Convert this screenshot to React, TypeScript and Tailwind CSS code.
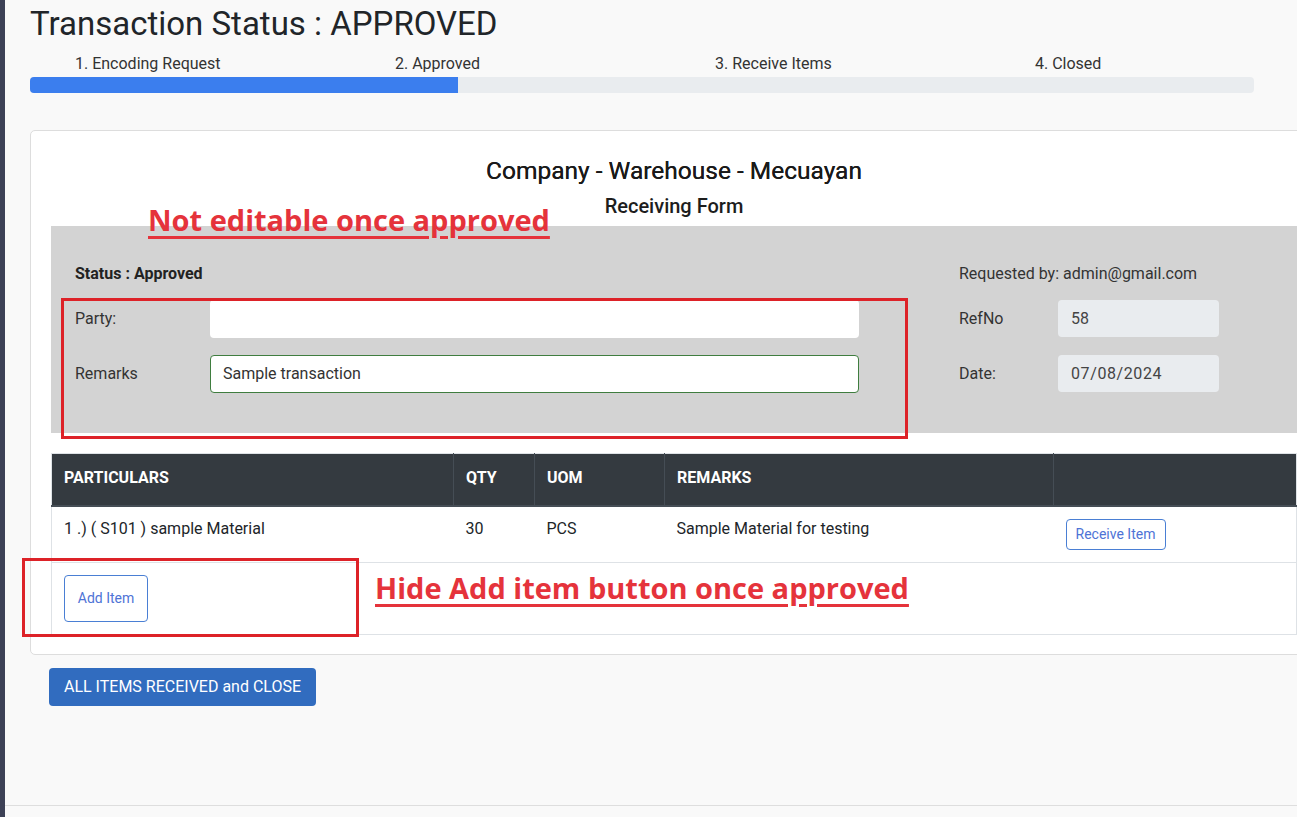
import React from "react";

const steps = ["1. Encoding Request", "2. Approved", "3. Receive Items", "4. Closed"];

const items = [
  {
    particulars: "1 .) ( S101 ) sample Material",
    qty: "30",
    uom: "PCS",
    remarks: "Sample Material for testing",
  },
];

export default function App() {
  return (
    <div className="relative flex h-[817px] w-[1297px] overflow-hidden bg-[#f9f9f9] font-['Roboto',sans-serif] text-[#212529]">
      {/* sidebar edge */}
      <div className="w-[5px] shrink-0 bg-[#3d4156]" />

      <div className="flex min-w-0 flex-1 flex-col">
        <main className="h-[806px] shrink-0 border-b border-[#dedede] pl-[25px]">
          <h1 className="mt-[3px] text-[33px] leading-[42px] text-[#212529]">Transaction Status : APPROVED</h1>

          <div className="mt-[8px] w-[1224px]">
            <div className="grid grid-cols-[320px_320px_320px_264px] text-[16px] leading-[22px] text-[#333]">
              {steps.map((step) => (
                <span key={step} className="pl-[45px]">
                  {step}
                </span>
              ))}
            </div>
            <div className="mt-[2px] h-[16px] overflow-hidden rounded bg-[#e9ecef]">
              <div className="h-full bg-[#3b7eee]" style={{ width: "35%" }} />
            </div>
          </div>

          <section className="mt-[37px] w-[1288px] rounded-[5px] border border-[#dddddd] bg-white px-[20px] pb-[19px] pt-[25px]">
            <h2 className="text-center text-[24.5px] leading-[30px] text-[#1a1a1a] [text-shadow:0_0_0.3px_#1a1a1a]">
              Company - Warehouse - Mecuayan
            </h2>
            <h3 className="mt-[6px] text-center text-[20px] font-medium leading-[28px] text-[#1d1d1d]">Receiving Form</h3>

            <div className="mt-[6px] flex h-[207px] bg-[#d3d3d3] pl-[24px] pt-[36px] text-[16px]">
              <div className="w-[784px]">
                <p className="h-[24px] font-bold leading-[24px] text-[#222]">Status : Approved</p>
                <div className="mt-[14px] flex items-center">
                  <label className="w-[135px] text-[#333]">Party:</label>
                  <div className="h-[38px] flex-1 rounded bg-white" />
                </div>
                <div className="mt-[17px] flex items-center">
                  <label className="w-[135px] text-[#333]">Remarks</label>
                  <div className="flex h-[38px] flex-1 items-center rounded border border-[#3f7d3f] bg-white px-[12px] text-[#333]">
                    Sample transaction
                  </div>
                </div>
              </div>

              <div className="ml-[100px]">
                <p className="h-[24px] leading-[24px] text-[#333]">Requested by: admin@gmail.com</p>
                <div className="mt-[14px] flex items-center">
                  <label className="w-[99px] text-[#333]">RefNo</label>
                  <div className="flex h-[37px] w-[161px] items-center rounded bg-[#e9ecef] px-[13px] text-[#444]">
                    58
                  </div>
                </div>
                <div className="mt-[18px] flex items-center">
                  <label className="w-[99px] text-[#333]">Date:</label>
                  <div className="flex h-[37px] w-[161px] items-center rounded bg-[#e9ecef] px-[13px] tracking-[0.6px] text-[#444]">
                    07/08/2024
                  </div>
                </div>
              </div>
            </div>

            <table className="mt-[20px] w-full border-collapse border border-[#dee2e6] text-left text-[16px]">
              <thead>
                <tr className="h-[52px] bg-[#343a40] text-white">
                  <th className="w-[402px] border-b-2 border-[#454d55] px-[12px] pb-[2px] font-bold">PARTICULARS</th>
                  <th className="w-[81px] border-b-2 border-l border-[#454d55] px-[12px] pb-[2px] font-bold">QTY</th>
                  <th className="w-[130px] border-b-2 border-l border-[#454d55] px-[12px] pb-[2px] font-bold">UOM</th>
                  <th className="w-[389px] border-b-2 border-l border-[#454d55] px-[12px] pb-[2px] font-bold">REMARKS</th>
                  <th className="border-b-2 border-l border-[#454d55] px-[12px]" />
                </tr>
              </thead>
              <tbody>
                {items.map((item) => (
                  <tr key={item.particulars} className="border-b border-[#dee2e6] align-top text-[#212529]">
                    <td className="px-[12px] pb-[12px] pt-[10px] leading-[24px]">{item.particulars}</td>
                    <td className="px-[12px] pb-[12px] pt-[10px] leading-[24px]">{item.qty}</td>
                    <td className="px-[12px] pb-[12px] pt-[10px] leading-[24px]">{item.uom}</td>
                    <td className="px-[12px] pb-[12px] pt-[10px] leading-[24px]">{item.remarks}</td>
                    <td className="px-[12px] py-[12px]">
                      <button className="h-[31px] w-[100px] rounded border border-[#4a7fd4] bg-white text-[14px] text-[#4e73d6]">
                        Receive Item
                      </button>
                    </td>
                  </tr>
                ))}
                <tr className="border-b border-[#dee2e6]">
                  <td colSpan={5} className="px-[12px] py-[12px]">
                    <button className="h-[47px] w-[84px] rounded border border-[#4a7fd4] bg-white text-[14px] text-[#4e73d6]">
                      Add Item
                    </button>
                  </td>
                </tr>
              </tbody>
            </table>
          </section>

          <button className="ml-[19px] mt-[13px] h-[38px] w-[267px] rounded bg-[#316cbf] text-[16px] text-white">
            ALL ITEMS RECEIVED and CLOSE
          </button>
        </main>
      </div>

      {/* review annotations drawn over the screenshot */}
      <div className="pointer-events-none absolute left-[61px] top-[298px] h-[141px] w-[847px] border-[3px] border-[#dd2228]" />
      <div className="pointer-events-none absolute left-[22px] top-[558px] h-[79px] w-[337px] border-[3px] border-[#dd2228]" />
      <p className="pointer-events-none absolute left-[148px] top-[201px] font-['Open_Sans',sans-serif] text-[29px] font-bold leading-[38px] text-[#e5333b] underline decoration-[3px] underline-offset-[5px]">
        Not editable once approved
      </p>
      <p className="pointer-events-none absolute left-[375px] top-[569px] font-['Open_Sans',sans-serif] text-[29px] font-bold leading-[38px] text-[#e5333b] underline decoration-[3px] underline-offset-[5px]">
        Hide Add item button once approved
      </p>
    </div>
  );
}
